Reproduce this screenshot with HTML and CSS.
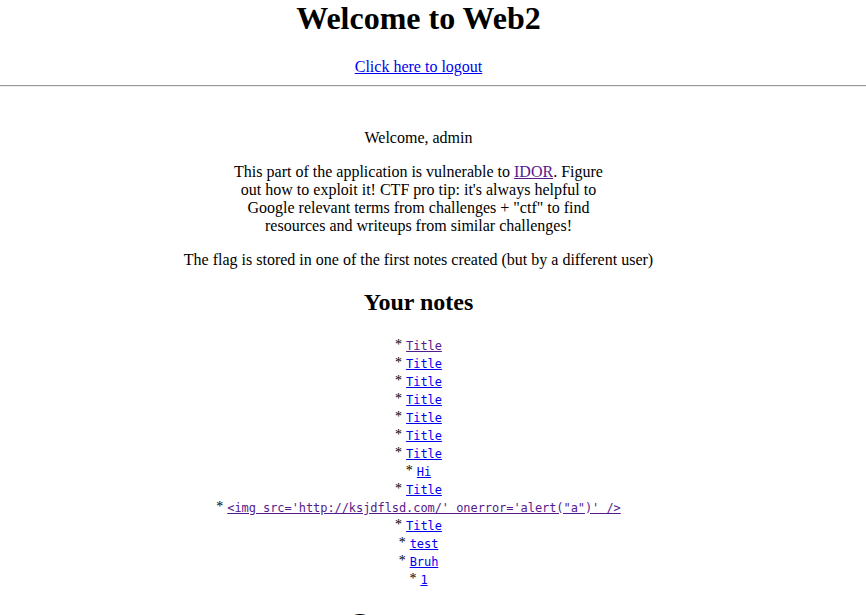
FILE: index.html
```html
<!DOCTYPE html>
<html>
<head>
<meta charset="utf-8">
<title>Web2</title>
<link rel="stylesheet" href="styles.css">
</head>
<body>
<div class="wrap header">
  <h1 class="title">Welcome to Web2</h1>
  <div class="logout"><a href="#logout">Click here to logout</a></div>
</div>
<hr class="rule">
<div class="wrap main">
  <p class="welcome">Welcome, admin</p>
  <p class="intro">This part of the application is vulnerable to <a class="visited" href="#idor">IDOR</a>. Figure out how to exploit it! CTF pro tip: it's always helpful to Google relevant terms from challenges + "ctf" to find resources and writeups from similar challenges!</p>
  <p class="flag">The flag is stored in one of the first notes created (but by a different user)</p>
  <h2 class="section notes-title">Your notes</h2>
  <ul class="notes">
    <li class="note"><span class="star">*</span> <a class="visited" href="#n1"><code>Title</code></a></li>
    <li class="note"><span class="star">*</span> <a href="#n2"><code>Title</code></a></li>
    <li class="note"><span class="star">*</span> <a href="#n3"><code>Title</code></a></li>
    <li class="note"><span class="star">*</span> <a href="#n4"><code>Title</code></a></li>
    <li class="note"><span class="star">*</span> <a href="#n5"><code>Title</code></a></li>
    <li class="note"><span class="star">*</span> <a href="#n6"><code>Title</code></a></li>
    <li class="note"><span class="star">*</span> <a href="#n7"><code>Title</code></a></li>
    <li class="note"><span class="star">*</span> <a href="#n8"><code>Hi</code></a></li>
    <li class="note"><span class="star">*</span> <a href="#n9"><code>Title</code></a></li>
    <li class="note"><span class="star">*</span> <a class="visited" href="#n10"><code>&lt;img src='http://ksjdflsd.com/' onerror='alert("a")' /&gt;</code></a></li>
    <li class="note"><span class="star">*</span> <a href="#n11"><code>Title</code></a></li>
    <li class="note"><span class="star">*</span> <a href="#n12"><code>test</code></a></li>
    <li class="note"><span class="star">*</span> <a href="#n13"><code>Bruh</code></a></li>
    <li class="note"><span class="star">*</span> <a href="#n14"><code>1</code></a></li>
  </ul>
  <h2 class="section">Create a note</h2>
</div>
</body>
</html>
```

FILE: styles.css
```css
html, body {
  margin: 0;
  padding: 0;
  background: #fff;
}
body {
  font-family: "Liberation Serif", "Times New Roman", serif;
  font-size: 16px;
  color: #000;
}
.wrap {
  width: 837px;
  text-align: center;
}
a {
  color: #0000ee;
  text-decoration: underline;
}
a.visited {
  color: #551a8b;
}
.title {
  font-size: 32px;
  font-weight: bold;
  margin: 0 0 21px;
  line-height: 37px;
}
.logout {
  line-height: 18px;
}
.rule {
  margin: 9px 0 0;
  border: 0;
  border-top: 1px solid #9a9a9a;
  border-bottom: 1px solid #eeeeee;
  height: 0;
}
.main {
  padding-top: 24px;
}
.welcome {
  margin: 18px 0 16px;
  line-height: 18px;
}
.intro {
  width: 380px;
  margin: 16px auto;
  line-height: 18px;
}
.flag {
  margin: 16px 0;
  line-height: 18px;
}
.section {
  font-size: 24px;
  font-weight: bold;
  margin: 19px 0;
  line-height: 28px;
}
.notes-title {
  margin-bottom: 20px;
}
.notes {
  list-style: none;
  margin: 16px 0;
  padding: 0;
}
.note {
  line-height: 18px;
  height: 18px;
}
.star {
  font-size: 14px;
  vertical-align: 1px;
}
.note code {
  font-family: "DejaVu Sans Mono", "Liberation Mono", monospace;
  font-size: 12px;
  letter-spacing: -0.07px;
}
```
